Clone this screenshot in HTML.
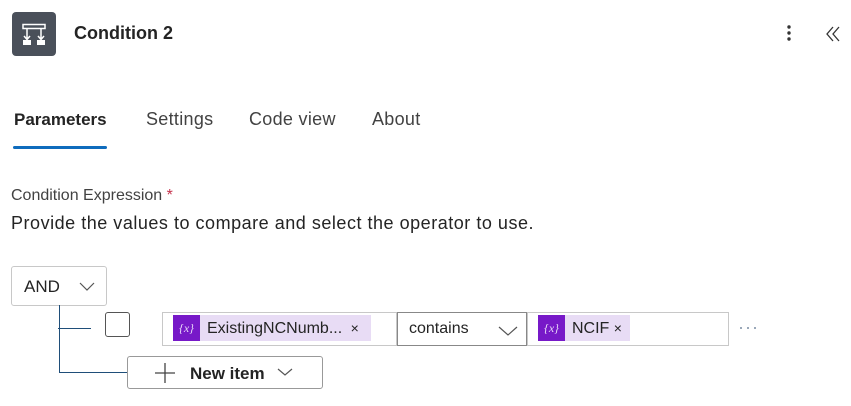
<!DOCTYPE html>
<html><head><style>
*{margin:0;padding:0;box-sizing:border-box}
body{width:851px;height:406px;background:#fff;font-family:"Liberation Sans",sans-serif;color:#242424;position:relative;overflow:hidden}
.a{position:absolute}
.tab{position:absolute;top:109px;font-size:18px;color:#424242}
.tok{position:absolute;background:#e8dcf5;height:26px;font-size:16px;line-height:26px;color:#242424;white-space:nowrap}
.ti{position:absolute;left:0;top:0;width:27px;height:26px;background:#7719c8;color:#e6d5f7;font-size:12px;line-height:26px;text-align:center;font-family:"Liberation Serif",serif;font-style:italic}
</style></head><body>
<div class="a" style="left:12px;top:12px;width:44px;height:44px;background:#4a505a;border-radius:4px">
<svg width="44" height="44" viewBox="0 0 44 44"><g stroke="#fff" stroke-width="1.5" fill="none"><rect x="11" y="12.5" width="22" height="4"/><path d="M15 16.5v11M29 16.5v11M12 24l3 3.5 3-3.5M26 24l3 3.5 3-3.5"/></g><rect x="11" y="28" width="8" height="5" fill="#fff"/><rect x="25" y="28" width="8" height="5" fill="#fff"/></svg>
</div>
<div class="a" style="left:74px;top:23px;font-size:18px;font-weight:bold;color:#242424">Condition 2</div>
<svg class="a" style="left:783px;top:24px" width="12" height="18"><circle cx="6" cy="3" r="1.7" fill="#333"/><circle cx="6" cy="9" r="1.7" fill="#333"/><circle cx="6" cy="15" r="1.7" fill="#333"/></svg>
<svg class="a" style="left:824px;top:25px" width="18" height="18"><path d="M9 2L3 9l6 7M15 2L9 9l6 7" stroke="#333" stroke-width="1.3" fill="none"/></svg>
<div class="tab" style="left:14px;font-weight:bold;color:#242424;font-size:17px;top:110px">Parameters</div>
<div class="tab" style="left:146px;letter-spacing:0.3px">Settings</div>
<div class="tab" style="left:249px;letter-spacing:0.3px">Code view</div>
<div class="tab" style="left:372px;letter-spacing:0.3px">About</div>
<div class="a" style="left:13px;top:146px;width:94px;height:3px;background:#0f6cbd;border-radius:2px"></div>
<div class="a" style="left:11px;top:187px;font-size:16px;color:#424242">Condition Expression <span style="color:#c4314b">*</span></div>
<div class="a" style="left:11px;top:213px;font-size:18px;letter-spacing:0.52px;color:#242424">Provide the values to compare and select the operator to use.</div>
<div class="a" style="left:11px;top:266px;width:96px;height:40px;border:1px solid #c8c8c8;border-radius:3px;font-size:17px;line-height:40px;padding-left:12px">AND</div>
<svg class="a" style="left:78px;top:280px" width="18" height="12"><path d="M2 3l7 7 7-7" stroke="#555" stroke-width="1.2" fill="none"/></svg>
<div class="a" style="left:59px;top:305px;width:1px;height:68px;background:#1f4e79"></div>
<div class="a" style="left:58px;top:328px;width:33px;height:1px;background:#1f4e79"></div>
<div class="a" style="left:59px;top:372px;width:68px;height:1px;background:#1f4e79"></div>
<div class="a" style="left:105px;top:312px;width:25px;height:25px;border:1px solid #555;border-radius:3px"></div>
<div class="a" style="left:162px;top:312px;width:235px;height:34px;border:1px solid #c8c8c8"></div>
<div class="tok" style="left:173px;top:315px;width:198px;padding-left:34px">ExistingNCNumb... <span style="font-size:14px;margin-left:4px">×</span><div class="ti">{<i>x</i>}</div></div>
<div class="a" style="left:397px;top:312px;width:130px;height:34px;border:1px solid #888;font-size:16px;line-height:32px;padding-left:11px">contains</div>
<svg class="a" style="left:497px;top:323px" width="22" height="14"><path d="M2 4l9 8 9-8" stroke="#555" stroke-width="1.2" fill="none"/></svg>
<div class="a" style="left:527px;top:312px;width:202px;height:34px;border:1px solid #c8c8c8"></div>
<div class="tok" style="left:538px;top:315px;width:92px;padding-left:34px">NCIF <span style="font-size:14px">×</span><div class="ti">{<i>x</i>}</div></div>
<svg class="a" style="left:739px;top:325px" width="20" height="6"><circle cx="2" cy="3" r="1" fill="#7a8ca3"/><circle cx="9" cy="3" r="1" fill="#7a8ca3"/><circle cx="16" cy="3" r="1" fill="#7a8ca3"/></svg>
<div class="a" style="left:127px;top:356px;width:196px;height:33px;border:1px solid #999;border-radius:3px;font-size:17px;line-height:33px;font-weight:bold;padding-left:62px">New item</div>
<svg class="a" style="left:154px;top:362px" width="22" height="22"><path d="M11 1v20M1 11h20" stroke="#444" stroke-width="1.3"/></svg>
<svg class="a" style="left:276px;top:366px" width="18" height="12"><path d="M2 3l7 6 7-6" stroke="#555" stroke-width="1.2" fill="none"/></svg>
</body></html>
